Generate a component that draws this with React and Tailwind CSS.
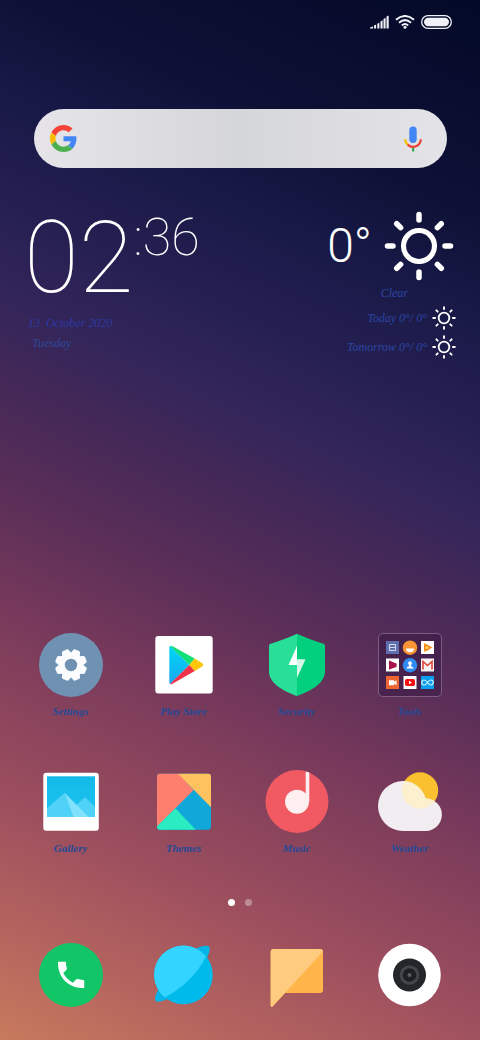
import React from "react";

const RAYS = [0, 45, 90, 135, 180, 225, 270, 315];

const SunIcon = ({ className }) => (
    <svg viewBox="0 0 70 70" className={className} aria-hidden="true">
        <circle cx="35" cy="35" r="15.5" fill="none" stroke="#fff" strokeWidth="5.2" />
        {RAYS.map((angle) => (
            <line
                key={angle}
                x1="35"
                y1="3.5"
                x2="35"
                y2="9"
                stroke="#fff"
                strokeWidth="5.5"
                strokeLinecap="round"
                transform={`rotate(${angle} 35 35)`}
            />
        ))}
    </svg>
);

const GoogleIcon = () => (
    <svg viewBox="0 0 48 48" className="size-[27px]" aria-hidden="true">
        <path fill="#F44336" d="M24 9.5c3.54 0 6.71 1.22 9.21 3.6l6.85-6.85C35.9 2.38 30.47 0 24 0 14.62 0 6.51 5.38 2.56 13.22l7.98 6.19C12.43 13.72 17.74 9.5 24 9.5z" />
        <path fill="#4285F4" d="M46.98 24.55c0-1.57-.15-3.09-.38-4.55H24v9.02h12.94c-.58 2.96-2.26 5.48-4.78 7.18l7.73 6c4.51-4.18 7.09-10.36 7.09-17.65z" />
        <path fill="#FBBC05" d="M10.53 28.59c-.48-1.45-.76-2.99-.76-4.59s.27-3.14.76-4.59l-7.98-6.19C.92 16.46 0 20.12 0 24c0 3.88.92 7.54 2.56 10.78l7.97-6.19z" />
        <path fill="#4CAF50" d="M24 48c6.48 0 11.93-2.13 15.89-5.81l-7.73-6c-2.15 1.45-4.92 2.3-8.16 2.3-6.26 0-11.57-4.22-13.47-9.91l-7.98 6.19C6.51 42.62 14.62 48 24 48z" />
    </svg>
);

const MicIcon = () => (
    <svg viewBox="0 0 18 26" className="h-[26px] w-[18px]" aria-hidden="true">
        <rect x="5.3" y="0.5" width="7.4" height="16.5" rx="3.7" fill="#4285F4" />
        <rect x="8" y="20" width="2.2" height="5.5" fill="#34A853" />
        <path d="M1.2 13.2A7.8 7.8 0 0 0 3.8 18.8" fill="none" stroke="#FBBC05" strokeWidth="2.2" />
        <path d="M3.6 18.6A7.8 7.8 0 0 0 16.8 13.2" fill="none" stroke="#EA4335" strokeWidth="2.2" />
    </svg>
);

const SettingsIcon = () => (
    <>
        <circle cx="32" cy="32" r="32" fill="#7092b2" />
        <circle cx="32" cy="32" r="12.4" fill="#fafcfe" />
        {RAYS.map((angle) => (
            <path
                key={angle}
                d="M27 21.500 28.300 17.200Q28.700 16 30 16H34Q35.300 16 35.700 17.200L37 21.500Z"
                fill="#fafcfe"
                transform={`rotate(${angle + 22.5} 32 32)`}
            />
        ))}
        <circle cx="32" cy="32" r="6.2" fill="#7092b2" />
    </>
);

const PlayStoreIcon = () => (
    <>
        <defs>
            <linearGradient id="play-blue" x1="0" y1="0" x2="0" y2="1">
                <stop offset="0" stopColor="#00d8f5" />
                <stop offset="1" stopColor="#18a8f0" />
            </linearGradient>
        </defs>
        <rect x="3.3" y="3" width="57.4" height="57.4" rx="3" fill="#fff" />
        <path d="M17.3 14Q17.3 13 18.5 13.2L37.3 32 18.5 50.8Q17.3 51 17.3 50Z" fill="url(#play-blue)" />
        <path d="M18 13Q19 12.5 20 13L42.7 25.5 37.3 32Z" fill="#12df78" />
        <path d="M42.7 25.5 50.6 30.6Q52 31.9 50.6 33.2L42.7 38 37.3 32Z" fill="#ffc60a" />
        <path d="M18 51Q19 51.5 20 51L42.7 38 37.3 32Z" fill="#f0314a" />
    </>
);

const SecurityIcon = () => (
    <>
        <path d="M32 .7V63C16 57.5 4 49 4 38.5V13Q4 11.3 5.5 10.8C15 7.5 24 4.5 32 .7Z" fill="#27df96" />
        <path d="M32 .7V63C48 57.5 60 49 60 38.5V13Q60 11.3 58.5 10.8C49 7.5 40 4.5 32 .7Z" fill="#02d07e" />
        <path d="M32 13 23.5 32H32Z" fill="#fff" />
        <path d="M32 13V45L40.5 26.3H32Z" fill="#d4f8e8" />
        <path d="M32 13V32H31V15Z" fill="#fff" />
    </>
);

const ToolsIcon = () => (
    <>
        <rect x=".5" y=".5" width="63" height="63" rx="4.5" fill="#3f1e48" fillOpacity=".7" stroke="#d8c0dc" strokeOpacity=".35" />
        <rect x="8" y="8" width="13" height="13" fill="#6070ae" />
        <path d="M11.5 11.5h6v6h-6zM11.5 14.5h6" fill="none" stroke="#d5dcf2" />
        <circle cx="32" cy="14.7" r="7.2" fill="#fb9434" />
        <path d="M28 15.5h8a4 3.8 0 0 1-8 0z" fill="#fff" />
        <rect x="43" y="8" width="13" height="13" fill="#fff" />
        <path d="M46 10 54.5 14.5 46 19Z" fill="#fb9816" />
        <circle cx="49" cy="14.8" r="2.3" fill="#ffd34d" stroke="#f36d22" />
        <rect x="8" y="25.5" width="13" height="13" fill="#fff" />
        <path d="M11 27.5 19 31.500 11 36.5Z" fill="#e0185a" />
        <path d="M11 27.5 13 28.500 18.500 30.500V34L11 36.500Z" fill="#a8124b" />
        <circle cx="32" cy="32.2" r="7.2" fill="#308cf0" />
        <circle cx="32" cy="30.2" r="1.9" fill="#fff" />
        <path d="M28.5 35.5Q28.500 33.500 31 33.200V31.200H33V33.200Q35.500 33.500 35.500 35.500Z" fill="#fff" />
        <rect x="43" y="25.5" width="13" height="13" fill="#f7f3f3" />
        <path d="M45 36.5V28.5L49.5 32.5 54 28.5V36.5" fill="none" stroke="#df4438" strokeWidth="1.6" />
        <rect x="8" y="43" width="13" height="13" fill="#ed6632" />
        <path d="M11 47.2h5v1.5l2.500-1.500v5l-2.500-1.500v1.500h-5z" fill="#fff" />
        <rect x="25.5" y="43" width="13" height="13" fill="#fff" />
        <rect x="27" y="46" width="10" height="7" rx="1.8" fill="#f60f0f" />
        <path d="M31 47.8 34 49.5 31 51.2Z" fill="#fff" />
        <rect x="43" y="43" width="13" height="13" fill="#0b9fee" />
        <path d="M49.5 49.5C48 47.5 47 47 46.2 47a2.5 2.5 0 0 0 0 5C47.5 52 48.5 51 49.5 49.5S51.5 47 52.8 47a2.5 2.5 0 0 1 0 5C52 52 51 51.5 49.5 49.5Z" fill="none" stroke="#c9f0ff" strokeWidth="1.2" />
    </>
);

const GalleryIcon = () => (
    <>
        <defs>
            <linearGradient id="gallery-sky" x1="0" y1="0" x2="0" y2="1">
                <stop offset="0" stopColor="#12b8e8" />
                <stop offset="1" stopColor="#1fc6f0" />
            </linearGradient>
        </defs>
        <rect x="4.3" y="2.7" width="55.5" height="58" rx="3" fill="#fff" />
        <rect x="8" y="6.3" width="48" height="40.7" fill="url(#gallery-sky)" />
        <path d="M30 41 46 27.3 56 36.7V47H30Z" fill="#4fd1f8" />
        <path d="M8 38.3 25.7 22.7 36 47H8Z" fill="#4fd1f8" />
        <path d="M25.7 22.7 49.5 47H34.5Z" fill="#82e1fc" />
    </>
);

const ThemesIcon = () => (
    <>
        <clipPath id="themes-card">
            <rect x="5" y="3.7" width="54" height="56" rx="3" />
        </clipPath>
        <g clipPath="url(#themes-card)">
            <rect x="5" y="3" width="54" height="57" fill="#10a8d9" />
            <path d="M5 3H26L41.7 20 5 56.5Z" fill="#ff7f6e" />
            <path d="M25.3 3H59V37.3Z" fill="#ffc25f" />
            <path d="M23.3 38.3 44 60H5V56.5Z" fill="#2aebc1" />
        </g>
    </>
);

const MusicIcon = () => (
    <>
        <circle cx="32" cy="31.5" r="31.5" fill="#f15a62" />
        <circle cx="32" cy="31.7" r="12" fill="#fdeef0" />
        <path d="M40.7 1.5 44.3 2.6V31.5H40.7Z" fill="#fdeef0" />
    </>
);

const CLOUD = "M25 61A25 25 0 0 1 25 11C35 11 44.5 18 47.7 28.5A16.2 16.2 0 0 1 47.5 61Z";

const WeatherIcon = () => (
    <>
        <clipPath id="cloud-shape">
            <path d={CLOUD} />
        </clipPath>
        <circle cx="42" cy="20.5" r="18.2" fill="#fbc02f" />
        <path d={CLOUD} fill="#f2edf1" />
        <circle cx="42" cy="20.5" r="18.2" fill="#fdf0cf" clipPath="url(#cloud-shape)" />
    </>
);

const PhoneIcon = () => (
    <>
        <circle cx="32" cy="32" r="32" fill="#12c567" />
        <path
            d="M6.62 10.79c1.44 2.83 3.76 5.14 6.59 6.59l2.2-2.2c.27-.27.67-.36 1.02-.24 1.12.37 2.33.57 3.57.57.55 0 1 .15 1 .7V20.700c0 .3-.2.300-.7.300C9.610 21 3 13.390 3 3.700c0-.5.1-.7.6-.7h4.200c.5 0 .7.2.7.7 0 1.250.2 2.750.570 3.870.110.350.030.740-.250 1.020l-2.200 2.200z"
            fill="#fff"
            transform="translate(14.6 14.3) scale(1.46)"
        />
    </>
);

const BrowserIcon = () => (
    <>
        <path d="M42 7C48 3 55 1.800 57 3.500S57 13 50 24C40 38 28 49 18 54.500 10 59 5 59.500 3.500 58 2 55 4 50 9 42Z" fill="#07b4e6" />
        <circle cx="31.5" cy="32" r="29.3" fill="#00baec" />
        <path d="M54 13.2A29.3 29.3 0 1 0 12.7 54.4C29 46 45 32 54 13.2Z" fill="#33d4ff" />
    </>
);

const MessagesIcon = () => (
    <>
        <path d="M8.5 6H55Q58 6 58 9V47Q58 50 55 50H20L7.5 63.5Q5.7 64.5 5.7 62.5V9Q5.7 6 8.5 6Z" fill="#ffb54a" />
        <path d="M8.5 6H55Q57.5 6 58 8.2L20 50 7.5 63.5Q5.7 64.5 5.7 62.5V9Q5.7 6 8.5 6Z" fill="#ffcb7f" />
    </>
);

const CameraIcon = () => (
    <>
        <circle cx="31.5" cy="32" r="31.3" fill="#fff" />
        <circle cx="31.5" cy="32" r="16.5" fill="#23272a" />
        <circle cx="31.5" cy="32" r="8.3" fill="#1d2022" stroke="#43464a" strokeWidth="3" />
        <circle cx="31.5" cy="32" r="2" fill="#5a5d60" />
    </>
);

const APPS = [
    { name: "Settings", Icon: SettingsIcon },
    { name: "Play Store", Icon: PlayStoreIcon },
    { name: "Security", Icon: SecurityIcon },
    { name: "Tools", Icon: ToolsIcon },
    { name: "Gallery", Icon: GalleryIcon },
    { name: "Themes", Icon: ThemesIcon },
    { name: "Music", Icon: MusicIcon },
    { name: "Weather", Icon: WeatherIcon },
];

const DOCK = [
    { name: "Phone", Icon: PhoneIcon },
    { name: "Browser", Icon: BrowserIcon },
    { name: "Messages", Icon: MessagesIcon },
    { name: "Camera", Icon: CameraIcon },
];

const StatusBar = () => (
    <header className="flex h-11 items-center justify-end gap-[6px] pr-7">
        <svg viewBox="0 0 19 14" className="h-[14px] w-[19px]" fill="#f0f1f6" aria-hidden="true">
            <path d="M0 13.5V12.5L3 11.5V13.5ZM4 13.5V10.5L6.100 9.6V13.5ZM7.300 8.8 9.400 7.800V13.5H7.300ZM10.500 6.5 12.600 5.3V13.5H10.500ZM13.500 4 15.600 2.800V13.5H13.500ZM16.500 1.5 18.700.4V13.5H16.500Z" />
        </svg>
        <svg viewBox="0 0 20 14" className="h-[14px] w-5" fill="none" stroke="#f0f1f6" strokeWidth="2" aria-hidden="true">
            <path d="M1 4.7Q10-2.7 19 4.7M4 7.7Q10 2.5 16 7.7M6.8 10.4Q10 7.6 13.2 10.4" />
            <circle cx="10" cy="12.3" r="1.5" fill="#f0f1f6" stroke="none" />
        </svg>
        <svg viewBox="0 0 31 14" className="h-[14px] w-[31px]" aria-hidden="true">
            <rect x=".7" y=".7" width="29.6" height="12.6" rx="6.3" fill="none" stroke="#f0f1f6" strokeWidth="1.3" />
            <rect x="3" y="2.8" width="25" height="8.4" rx="4.2" fill="#f0f1f6" />
        </svg>
    </header>
);

const SearchBar = () => (
    <form
        className="mr-[33px] ml-[34px] mt-[65px] flex h-[59px] items-center rounded-full bg-linear-to-r from-[#e6e4e9] via-[#d5d6da] to-[#e4e4e8] pr-[25px] pl-4"
        onSubmit={(e) => e.preventDefault()}
    >
        <button type="button" aria-label="Google">
            <GoogleIcon />
        </button>
        <input type="search" aria-label="Search" className="min-w-0 flex-1 bg-transparent px-4 text-base text-gray-800 outline-none" />
        <button type="button" aria-label="Voice search">
            <MicIcon />
        </button>
    </form>
);

const Clock = () => (
    <div>
        <div className="flex items-start font-[Roboto,sans-serif] font-thin text-white not-italic">
            <span className="text-[100px] leading-[94px]">02</span>
            <span className="text-[52px] leading-[54px]">:36</span>
        </div>
        <p className="mt-2 ml-1 text-xs leading-5 whitespace-pre text-[#2c3aa4]">13  October 2020</p>
        <p className="ml-2 text-xs leading-5 text-[#2c4a9c]">Tuesday</p>
    </div>
);

const Forecast = ({ day }) => (
    <div className="flex h-[29px] items-center gap-[5px] text-xs text-[#2c46a4]">
        <span>{day} 0°/ 0°</span>
        <SunIcon className="size-6" />
    </div>
);

const WeatherWidget = () => (
    <div className="flex flex-col items-end">
        <div className="mr-0.5 flex items-center gap-3">
            <span className="font-[Roboto,sans-serif] text-5xl leading-[70px] font-light text-white not-italic">0°</span>
            <SunIcon className="size-[70px]" />
        </div>
        <p className="mt-0.5 mr-12 text-xs leading-5 text-[#2c46a4]">Clear</p>
        <Forecast day="Today" />
        <Forecast day="Tomorrow" />
    </div>
);

const AppIcon = ({ name, Icon, showLabel }) => (
    <button aria-label={name} className="flex flex-col items-center gap-1.5">
        <svg viewBox="0 0 64 64" className="size-16" aria-hidden="true">
            <Icon />
        </svg>
        {showLabel && <span className="text-[11px] leading-4 font-bold text-[#254a96] italic">{name}</span>}
    </button>
);

const App = () => {
    return (
        <div className="flex min-h-screen flex-col bg-[linear-gradient(205deg,#030928_0%,#0e1136_17%,#181947_25%,#262052_34%,#33255a_41%,#472957_49%,#5c2f58_57%,#75385b_65%,#8a445c_73%,#9d4f5e_81%,#b2625e_90%,#c87a5d_100%)] font-['Liberation_Serif',serif] italic">
            <StatusBar />
            <SearchBar />
            <section className="mt-[43px] flex items-start justify-between px-6">
                <Clock />
                <WeatherWidget />
            </section>
            <main className="mt-auto grid grid-cols-4 gap-y-[51px] px-[14px]">
                {APPS.map((app) => (
                    <AppIcon key={app.name} name={app.name} Icon={app.Icon} showLabel />
                ))}
            </main>
            <div className="mt-[43px] flex justify-center gap-[10px]">
                <span className="size-[7px] rounded-full bg-white" />
                <span className="size-[7px] rounded-full bg-white/35" />
            </div>
            <nav className="mt-[37px] grid grid-cols-4 px-[14px] pb-[33px]">
                {DOCK.map((app) => (
                    <AppIcon key={app.name} name={app.name} Icon={app.Icon} />
                ))}
            </nav>
        </div>
    );
};

export default App;
